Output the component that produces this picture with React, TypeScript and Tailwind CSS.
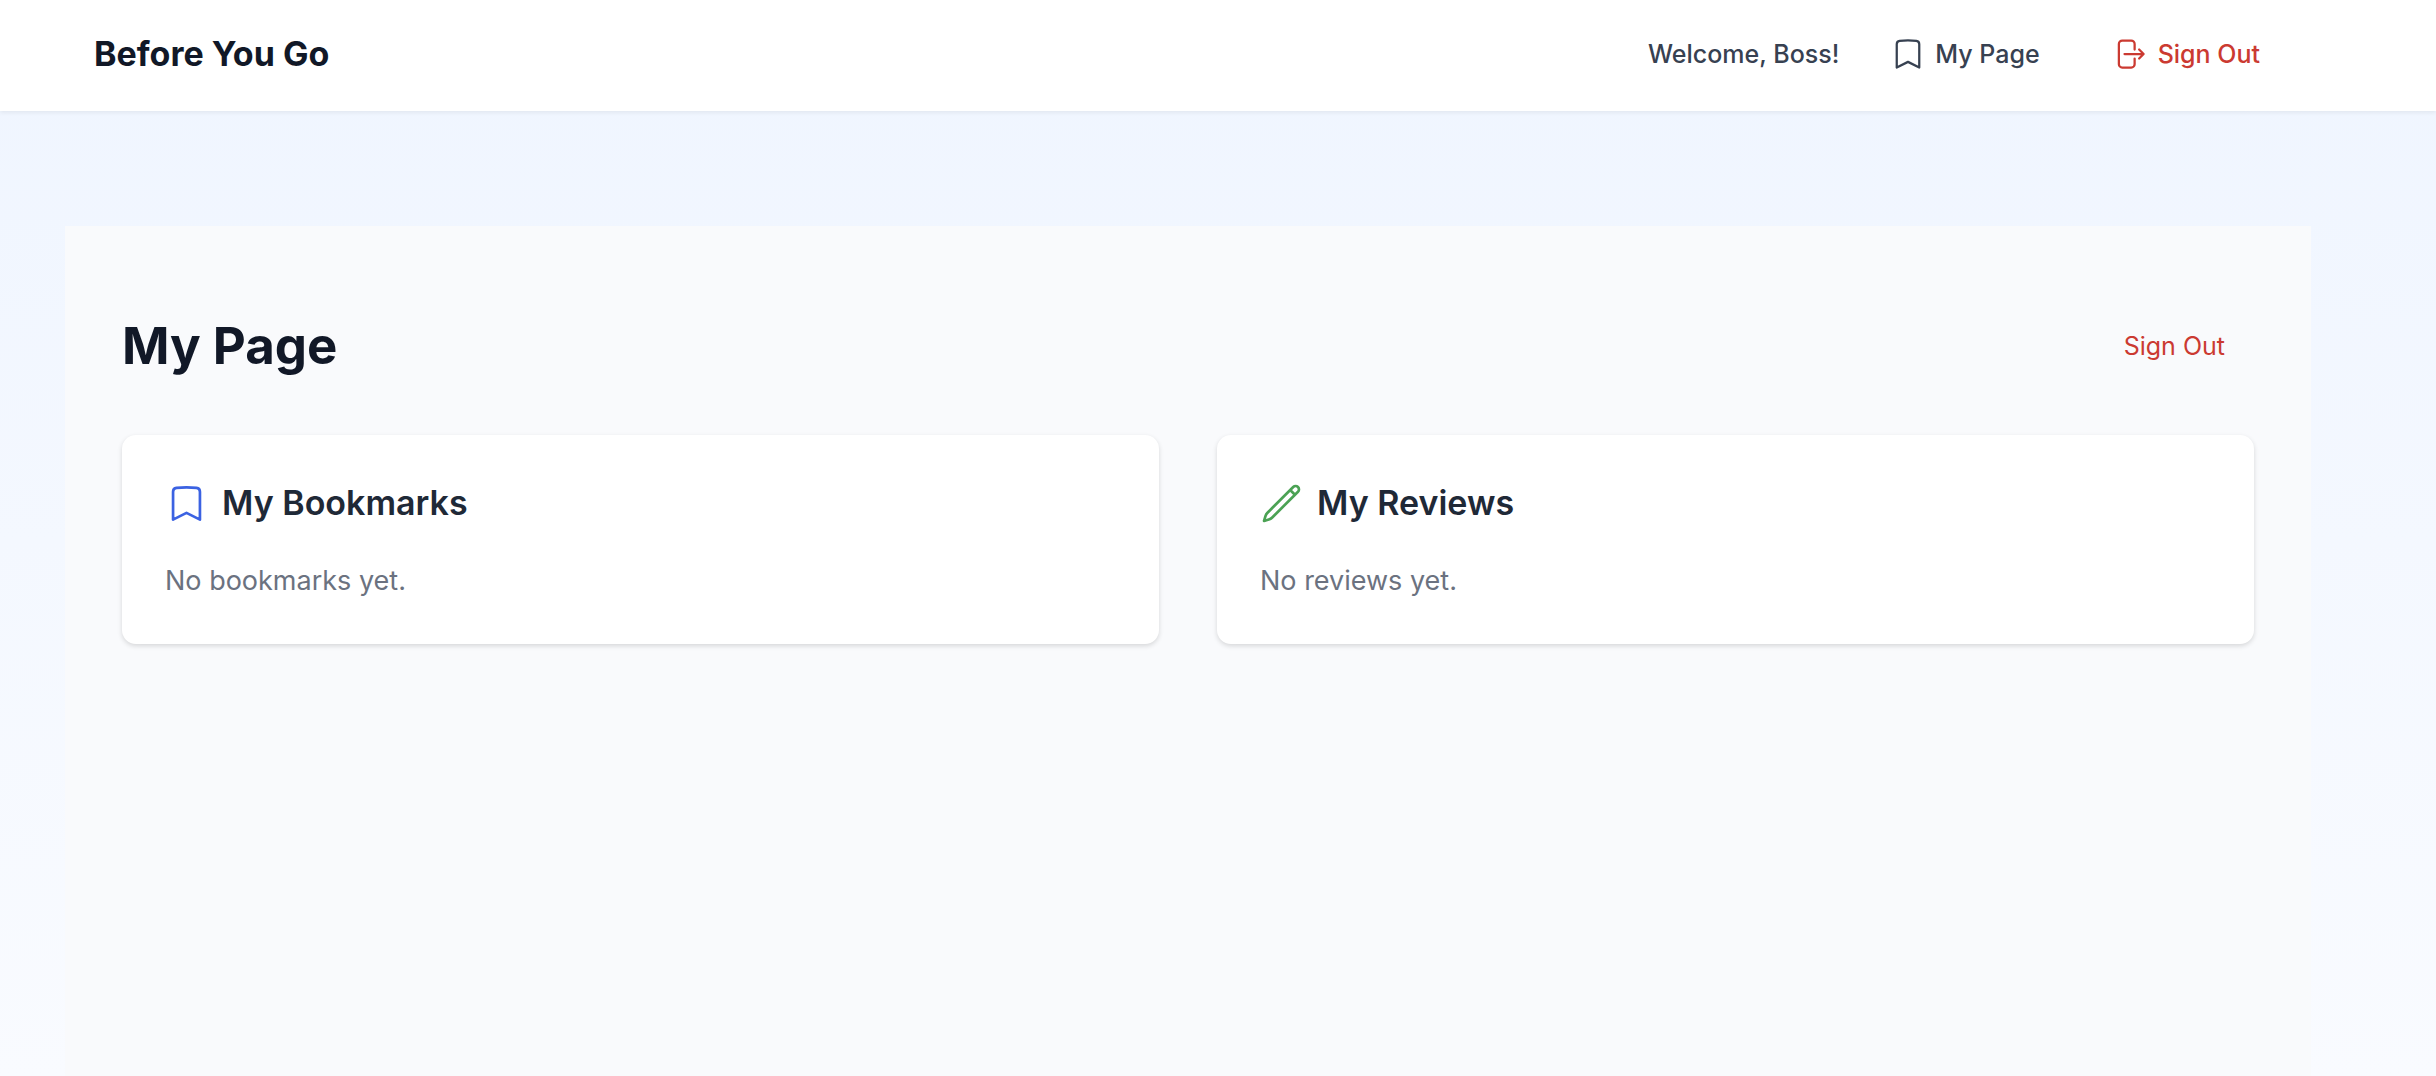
import type { ReactNode } from "react";
import {
  HiOutlineArrowRightOnRectangle,
  HiOutlineBookmark,
  HiOutlinePencil,
} from "react-icons/hi2";

function Header() {
  return (
    <header className="bg-white pr-[60px] shadow-[0_2px_4px_rgba(0,0,0,0.06)]">
      <div className="mx-auto flex h-[111px] max-w-[2304px] items-center justify-between px-[58px] pb-1">
        <a href="#" className="text-[34px] leading-[50px] font-bold text-[#111827]">
          Before You Go
        </a>
        <nav className="flex items-center text-[25px] leading-9 font-medium text-[#374151]">
          <span>Welcome, Boss!</span>
          <a href="#my-page" className="ml-[51px] flex items-center gap-[9px]">
            <HiOutlineBookmark className="size-9" aria-hidden="true" />
            My Page
          </a>
          <button type="button" className="ml-[49px] flex items-center gap-[11px] px-[22px] text-[#cb3a31]">
            <HiOutlineArrowRightOnRectangle className="size-9" aria-hidden="true" />
            Sign Out
          </button>
        </nav>
      </div>
    </header>
  );
}

function Card({ icon, title, message }: { icon: ReactNode; title: string; message: string }) {
  return (
    <section className="rounded-[14px] bg-white px-[43px] py-[43px] shadow-[0_2px_5px_rgba(0,0,0,0.14)]">
      <h2 className="flex items-center gap-[14px] text-[34px] leading-[50px] font-semibold text-[#1f2937]">
        {icon}
        {title}
      </h2>
      <p className="mt-8 text-[27px] leading-[41px] text-[#6b7280]">{message}</p>
    </section>
  );
}

export default function App() {
  return (
    <div className="flex min-h-screen flex-col bg-linear-to-b from-[#eff5ff] to-[#f9fbff] font-['Inter',sans-serif]">
      <Header />
      <div className="flex flex-1 flex-col pr-[60px] pt-[115px]">
        <div className="mx-auto flex w-full max-w-[2304px] flex-1 flex-col px-[29px]">
          <main className="flex-1 bg-[#f9fafc] px-[57px] pt-[87px]">
            <div className="mb-[57px] flex items-center justify-between">
              <h1 className="text-[51px] leading-[65px] font-bold text-[#111827]">My Page</h1>
              <button type="button" className="px-[29px] text-[25px] leading-9 text-[#cb3a31]">
                Sign Out
              </button>
            </div>
            <div className="grid grid-cols-2 gap-[58px]">
              <Card
                icon={<HiOutlineBookmark className="size-[43px] text-[#3b62e2]" aria-hidden="true" />}
                title="My Bookmarks"
                message="No bookmarks yet."
              />
              <Card
                icon={<HiOutlinePencil className="size-[43px] text-[#4ba254]" aria-hidden="true" />}
                title="My Reviews"
                message="No reviews yet."
              />
            </div>
          </main>
        </div>
      </div>
    </div>
  );
}
